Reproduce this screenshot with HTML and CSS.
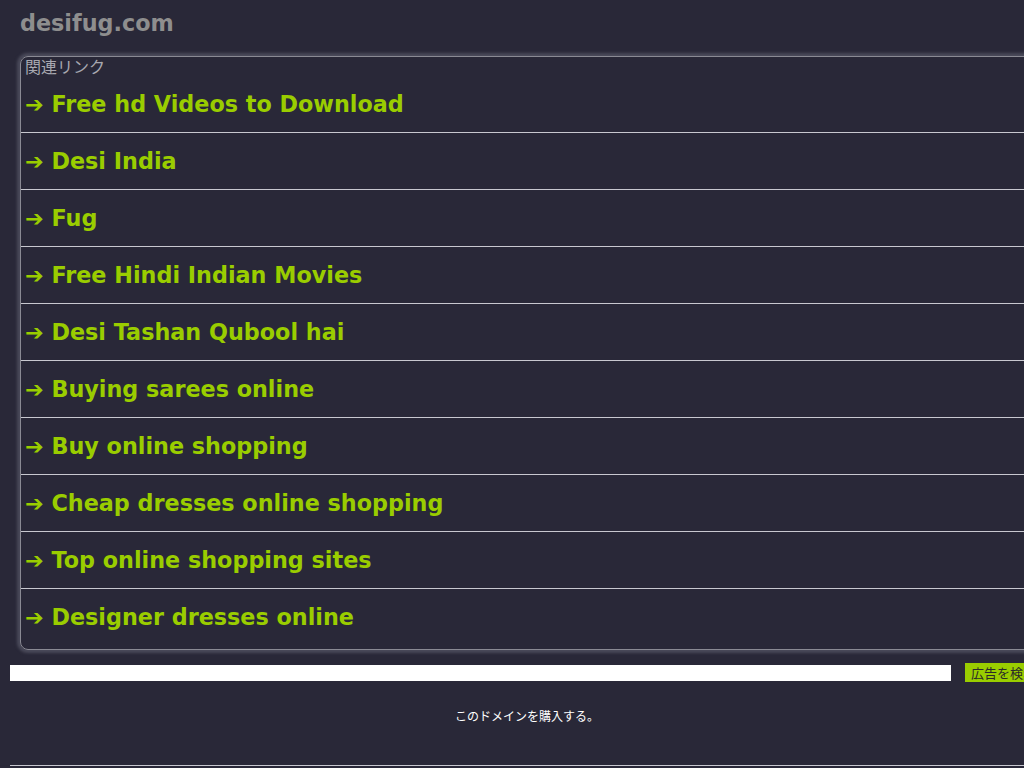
FILE: index.html
```html
<!DOCTYPE html>
<html lang="ja">
<head>
    <meta charset="UTF-8">
    <title>desifug.com</title>
    <link rel="stylesheet" href="styles.css">
</head>
<body>
    <div class="wrap">
        <h1 class="domain">desifug.com</h1>

        <div class="links">
            <div class="links-title">関連リンク</div>
            <ul>
                <li><a href="#">➔ Free hd Videos to Download</a></li>
                <li><a href="#">➔ Desi India</a></li>
                <li><a href="#">➔ Fug</a></li>
                <li><a href="#">➔ Free Hindi Indian Movies</a></li>
                <li><a href="#">➔ Desi Tashan Qubool hai</a></li>
                <li><a href="#">➔ Buying sarees online</a></li>
                <li><a href="#">➔ Buy online shopping</a></li>
                <li><a href="#">➔ Cheap dresses online shopping</a></li>
                <li><a href="#">➔ Top online shopping sites</a></li>
                <li><a href="#">➔ Designer dresses online</a></li>
            </ul>
        </div>

        <form class="search">
            <input type="text" class="search-input">
            <button type="button" class="search-btn">広告を検索</button>
        </form>

        <p class="buy"><a href="#">このドメインを購入する。</a></p>
        <hr class="rule">
    </div>
</body>
</html>
```

FILE: styles.css
```css
body {
    margin: 0;
    background: #292838;
    font-family: "DejaVu Sans", "Noto Sans CJK JP", sans-serif;
    overflow: hidden;
}
.wrap { width: 1034px; padding: 0 0 0 10px; }
.domain {
    margin: 0; padding: 9px 0 0 10px;
    font-size: 22.3px; font-weight: bold; color: #8e8e8e; line-height: 28px;
}
.links {
    margin: 19px 0 0 10px;
    border: 1px solid #8a8a94; border-radius: 8px;
    box-shadow: 0 0 3px 3px #4a4a5a;
    padding: 0 0 4px;
}
.links-title {
    font-family: "Noto Sans CJK JP", sans-serif;
    font-size: 16px; color: #a8a8b0; line-height: 19px;
    padding: 0 4px;
}
.links ul { list-style: none; margin: 0; padding: 0; }
.links li {
    height: 56px; display: flex; align-items: center;
    border-bottom: 1px solid #c8c8d0; padding: 0 4px;
}
.links li:last-child { border-bottom: none; }
.links a {
    color: #9acd00; text-decoration: none;
    font-size: 22.3px; font-weight: bold; line-height: 28px;
}
.search { display: flex; align-items: center; margin-top: 13px; gap: 14px; }
.search-input {
    width: 941px; height: 16px; border: none; padding: 0; margin: 0;
    background: #fff; outline: none;
}
.search-btn {
    height: 19px; padding: 0 6px; border: none; margin: 0;
    background: #9acd00; color: #2a2a2a;
    font-family: "Noto Sans CJK JP", sans-serif; font-size: 13px; line-height: 19px;
}
.buy { text-align: center; margin: 25px 0 0; font-size: 12px; line-height: 18px; }
.buy a { color: #fff; text-decoration: none; font-family: "Noto Sans CJK JP", sans-serif; }
.rule { border: none; border-top: 1px solid #c8c8d0; margin: 39px 0 0; }
```
